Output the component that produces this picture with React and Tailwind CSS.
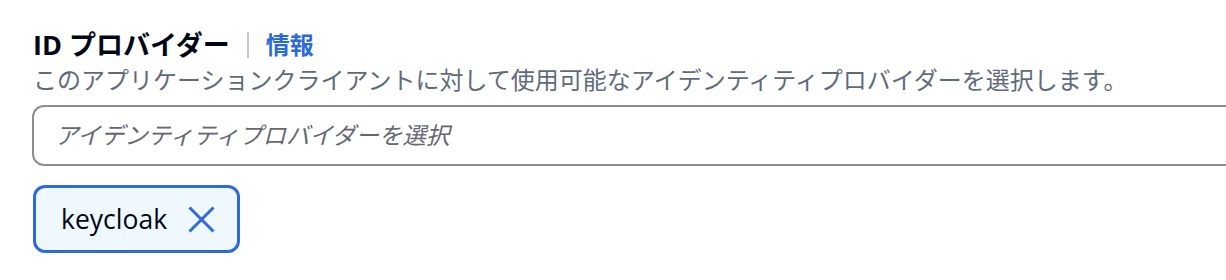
import React from "react";

export default function App() {
  return (
    <div className="w-[1226px] h-[280px] overflow-hidden bg-white pl-[33px] pt-[28px] font-['Open_Sans','Noto_Sans_CJK_JP',sans-serif]">
      {/* Label */}
      <div className="flex items-center h-[34px]">
        <span className="text-[27px] leading-[34px] font-bold text-[#000716]">ID プロバイダー</span>
        <span className="mx-[17px] w-[2px] h-[26px] bg-[#c6c6cd]" />
        <a className="text-[24px] leading-[34px] font-bold text-[#2a6ad8]">情報</a>
      </div>

      {/* Description */}
      <p className="mt-[3px] text-[24px] leading-[30px] text-[#5f6b7a]">
        このアプリケーションクライアントに対して使用可能なアイデンティティプロバイダーを選択します。
      </p>

      {/* Select */}
      <div className="mt-[10px] -ml-px w-[1240px] h-[61px] flex items-center border-2 border-[#8c8c94] rounded-[12px] pl-[21px]">
        <span className="text-[23.5px] italic text-[#656871]">アイデンティティプロバイダーを選択</span>
      </div>

      {/* Token */}
      <div className="mt-[19px] inline-flex items-center h-[68px] border-[3px] border-[#2f6bd8] bg-[#f0f8ff] rounded-[12px] pl-[25px] pr-[22px]">
        <span className="text-[26.5px] text-[#000716] leading-none">keycloak</span>
        <button className="ml-[21px] text-[#2f6bd8]">
          <svg width="27" height="27" viewBox="0 0 27 27" fill="none" stroke="currentColor" strokeWidth="3">
            <path d="M1.5 1.5 25.5 25.5M25.5 1.5 1.5 25.5" />
          </svg>
        </button>
      </div>
    </div>
  );
}
